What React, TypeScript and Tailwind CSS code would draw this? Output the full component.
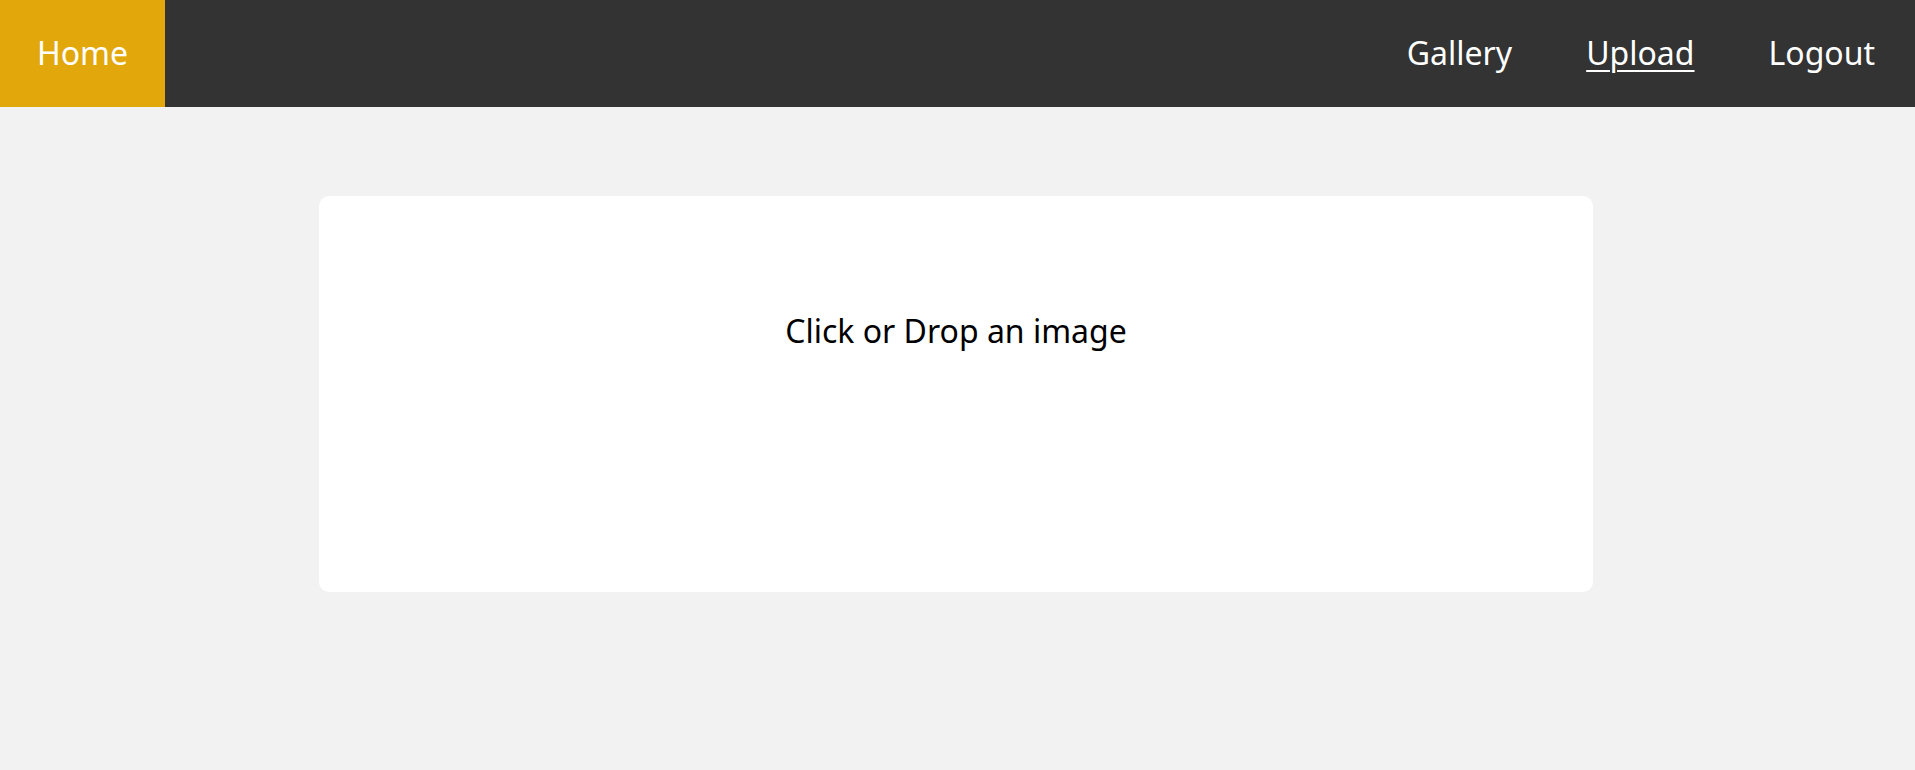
export default function App() {
  return (
    <div className="min-h-screen bg-[#f2f2f2] font-['Noto_Sans',sans-serif]">
      <nav className="flex h-[107px] items-stretch bg-[#333333] pr-[3px] text-[32px] text-white">
        <a href="#" className="flex items-center bg-[#e2a70a] px-[37px] pb-[2px]">
          Home
        </a>
        <div className="ml-auto flex items-stretch">
          <a href="#" className="flex items-center px-[37px] pb-[2px]">
            Gallery
          </a>
          <a href="#" className="flex items-center px-[37px] pb-[2px] underline underline-offset-[5px] decoration-2">
            Upload
          </a>
          <a href="#" className="flex items-center px-[37px] pb-[2px]">
            Logout
          </a>
        </div>
      </nav>

      <main className="flex justify-center pt-[89px]">
        <div className="mr-[3px] h-[396px] w-[1274px] cursor-pointer rounded-[10px] bg-white pt-[111px] text-center text-[32px] text-black">
          Click or Drop an image
        </div>
      </main>
    </div>
  )
}
